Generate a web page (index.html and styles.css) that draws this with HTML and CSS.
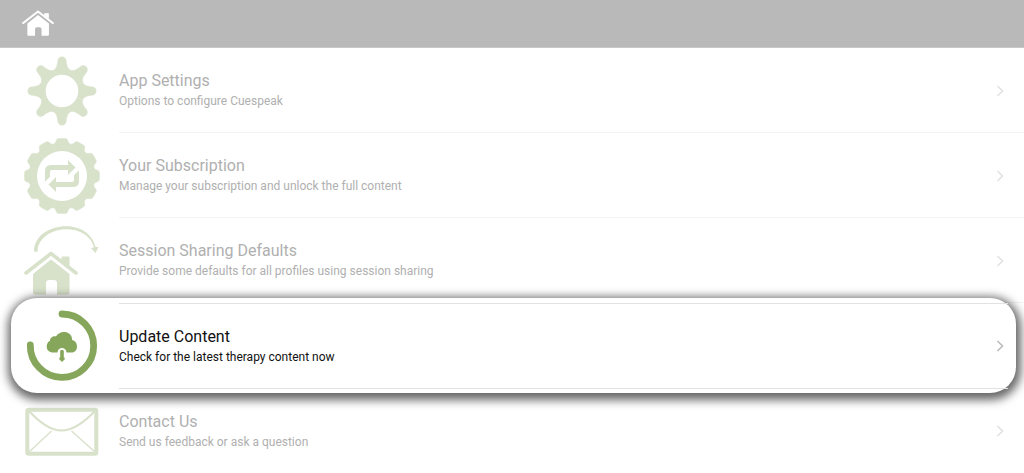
FILE: index.html
```html
<!DOCTYPE html>
<html lang="en">

<head>
    <meta charset="UTF-8">
    <meta name="viewport" content="width=device-width, initial-scale=1.0">
    <title>Cuespeak Settings</title>
    <link rel="stylesheet" href="styles.css">
</head>

<body>
    <!-- shared shapes -->
    <svg class="defs" aria-hidden="true">
        <symbol id="house" viewBox="0 0 54 44">
            <path d="M2 22 L27 2.5 L52 22" fill="none" stroke="currentColor" stroke-width="3.6" stroke-linecap="round" stroke-linejoin="round" />
            <path d="M38 9 V6 H45 V14.500 Z" fill="currentColor" stroke="currentColor" stroke-width="1" stroke-linejoin="round" />
            <path d="M27 8.500 L45.500 23 V41.500 Q45.500 43.500 43.500 43.500 H33 V32 Q33 29 30 29 H25 Q22 29 22 32 V43.500 H11 Q9 43.500 9 41.500 V23 Z" fill="currentColor" />
        </symbol>
        <symbol id="chevron" viewBox="0 0 8 12">
            <path d="M1.500 1 L6.500 6 L1.500 11" fill="none" stroke="currentColor" stroke-width="1.600" />
        </symbol>
    </svg>

    <header class="top-bar">
        <a class="home" href="#" aria-label="Home"><svg width="32" height="26"><use href="#house" /></svg></a>
    </header>

    <main class="menu">
        <a class="row" href="#">
            <svg class="icon" viewBox="0 0 119 84" fill="currentColor">
                <g transform="translate(62 42)">
                    <path id="cog" d="M0 0 L-8.600 -20.800 C-5.400 -22.200 -4.800 -26 -4.200 -30 A4.200 4.200 0 0 1 4.200 -30 C4.800 -26 5.400 -22.200 8.600 -20.800 Z" stroke="currentColor" stroke-width=".4" />
                    <use href="#cog" transform="rotate(45)" />
                    <use href="#cog" transform="rotate(90)" />
                    <use href="#cog" transform="rotate(135)" />
                    <use href="#cog" transform="rotate(180)" />
                    <use href="#cog" transform="rotate(225)" />
                    <use href="#cog" transform="rotate(270)" />
                    <use href="#cog" transform="rotate(315)" />
                    <circle r="16.300" fill="#fff" />
                </g>
            </svg>
            <span class="text">
                <span class="title">App Settings</span>
                <span class="detail">Options to configure Cuespeak</span>
            </span>
            <svg class="chevron"><use href="#chevron" /></svg>
        </a>

        <a class="row" href="#">
            <svg class="icon" viewBox="0 0 119 84" fill="currentColor">
                <g transform="translate(62 42)">
                    <path id="tooth" d="M0 0 L-8.600 -32 Q-7 -32.200 -6.300 -34 L-5.500 -36 Q-5 -37.300 -3.800 -37.400 Q0 -37.800 3.800 -37.400 Q5 -37.300 5.500 -36 L6.300 -34 Q7 -32.200 8.600 -32 Z" stroke="currentColor" stroke-width=".4" />
                    <use href="#tooth" transform="rotate(30)" />
                    <use href="#tooth" transform="rotate(60)" />
                    <use href="#tooth" transform="rotate(90)" />
                    <use href="#tooth" transform="rotate(120)" />
                    <use href="#tooth" transform="rotate(150)" />
                    <use href="#tooth" transform="rotate(180)" />
                    <use href="#tooth" transform="rotate(210)" />
                    <use href="#tooth" transform="rotate(240)" />
                    <use href="#tooth" transform="rotate(270)" />
                    <use href="#tooth" transform="rotate(300)" />
                    <use href="#tooth" transform="rotate(330)" />
                    <circle r="25" fill="#fff" />
                    <path id="loop" d="M-17 5.500 V-5 Q-17 -11 -11 -11 H6 V-16 L13.500 -8.500 L6 -1 V-6 H-10 Q-12 -6 -12 -4 V1 Z" />
                    <use href="#loop" transform="rotate(180)" />
                </g>
            </svg>
            <span class="text">
                <span class="title">Your Subscription</span>
                <span class="detail">Manage your subscription and unlock the full content</span>
            </span>
            <svg class="chevron"><use href="#chevron" /></svg>
        </a>

        <a class="row" href="#">
            <svg class="icon" viewBox="0 0 119 84" fill="currentColor">
                <path d="M34 31 C36 3 88 -3 95.500 28 H98.500 L95.500 34 L91 29 L94 28.500 C87 2 41 6 37.500 31 Z" />
                <circle cx="35.800" cy="31" r="2" />
                <use href="#house" x="24" y="32" width="54" height="44" />
            </svg>
            <span class="text">
                <span class="title">Session Sharing Defaults</span>
                <span class="detail">Provide some defaults for all profiles using session sharing</span>
            </span>
            <svg class="chevron"><use href="#chevron" /></svg>
        </a>

        <a class="row active" href="#">
            <svg class="icon" viewBox="0 0 119 84" fill="currentColor">
                <path d="M62 10 A31.700 31.700 0 1 1 30.300 41" fill="none" stroke="currentColor" stroke-width="6.800" stroke-linecap="round" />
                <path d="M53.500 48.500 C49 48.500 46.700 46 46.700 42.500 C46.700 39.500 48.300 37.500 50 36.700 C50 33 54 31.500 56 32.500 C58 29 61.500 27.500 65 28 C69.500 28.500 72.500 32 72 36 C75.500 36.700 77 39.500 77 42.500 C77 46.500 74.500 48.500 71 48.500 H66.500 C66.500 42.500 57.500 42.500 57.500 48.500 Z" />
                <path d="M62 47.500 V54" fill="none" stroke="currentColor" stroke-width="3.600" stroke-linecap="round" />
                <path d="M59.300 53.500 H64.700 L64.500 55.500 L62 58 L59.500 55.500 Z" />
            </svg>
            <span class="text">
                <span class="title">Update Content</span>
                <span class="detail">Check for the latest therapy content now</span>
            </span>
            <svg class="chevron"><use href="#chevron" /></svg>
        </a>

        <a class="row" href="#">
            <svg class="icon" viewBox="0 0 119 84" fill="none" stroke="currentColor">
                <rect x="27.300" y="20.700" width="69" height="44" rx="1.500" stroke-width="4" />
                <path d="M29 22 C53 48 70 48 95 22" stroke-width="2" />
                <path d="M29 63 L51.500 42 M95 63 L71.500 42" stroke-width="1.300" />
            </svg>
            <span class="text">
                <span class="title">Contact Us</span>
                <span class="detail">Send us feedback or ask a question</span>
            </span>
            <svg class="chevron"><use href="#chevron" /></svg>
        </a>
    </main>
</body>

</html>
```
FILE: styles.css
```css
* {
    box-sizing: border-box;
}

body {
    margin: 0;
    background-color: #fff;
    font-family: Roboto, "Liberation Sans", sans-serif;
}

.defs {
    display: block;
    width: 0;
    height: 0;
}

.top-bar {
    display: flex;
    align-items: center;
    height: 48px;
    padding: 0 22px 2px;
    background-color: #b9b9b9;
    border-bottom: 1px solid #c8c8c8;
}

.home {
    display: flex;
    color: #fff;
}

.menu {
    display: flex;
    flex-direction: column;
}

.row {
    position: relative;
    display: flex;
    align-items: center;
    height: 85px;
    color: #d8e1ca;
    text-decoration: none;
}

.icon {
    flex: none;
    width: 119px;
    height: 84px;
}

.text {
    display: flex;
    flex: 1;
    flex-direction: column;
    justify-content: center;
    height: 100%;
    border-bottom: 1px solid #f4f4f4;
    color: #b0b0b0;
}

.row:last-child {
    height: 84px;
}

.row:last-child .text {
    border-bottom: none;
}

.title {
    font-size: 16px;
    line-height: 22px;
}

.detail {
    font-size: 12px;
    line-height: 18px;
}

.chevron {
    position: absolute;
    right: 20px;
    width: 8px;
    height: 12px;
    color: #e2e2e2;
}

/* highlighted row */
.active {
    z-index: 1;
    height: 86px;
    color: #86a65b;
}

.active::before {
    content: "";
    position: absolute;
    z-index: -1;
    top: -5px;
    right: 8px;
    bottom: -4px;
    left: 11px;
    border-radius: 26px;
    background-color: #fff;
    box-shadow: 1px 3px 10px 4px rgba(0, 0, 0, 0.6);
}

.active .text {
    margin-right: 16px;
    border-top: 1px solid #e2e2e2;
    border-bottom-color: #e2e2e2;
    color: #111;
}

.active .chevron {
    color: #bcbcbc;
}
```
